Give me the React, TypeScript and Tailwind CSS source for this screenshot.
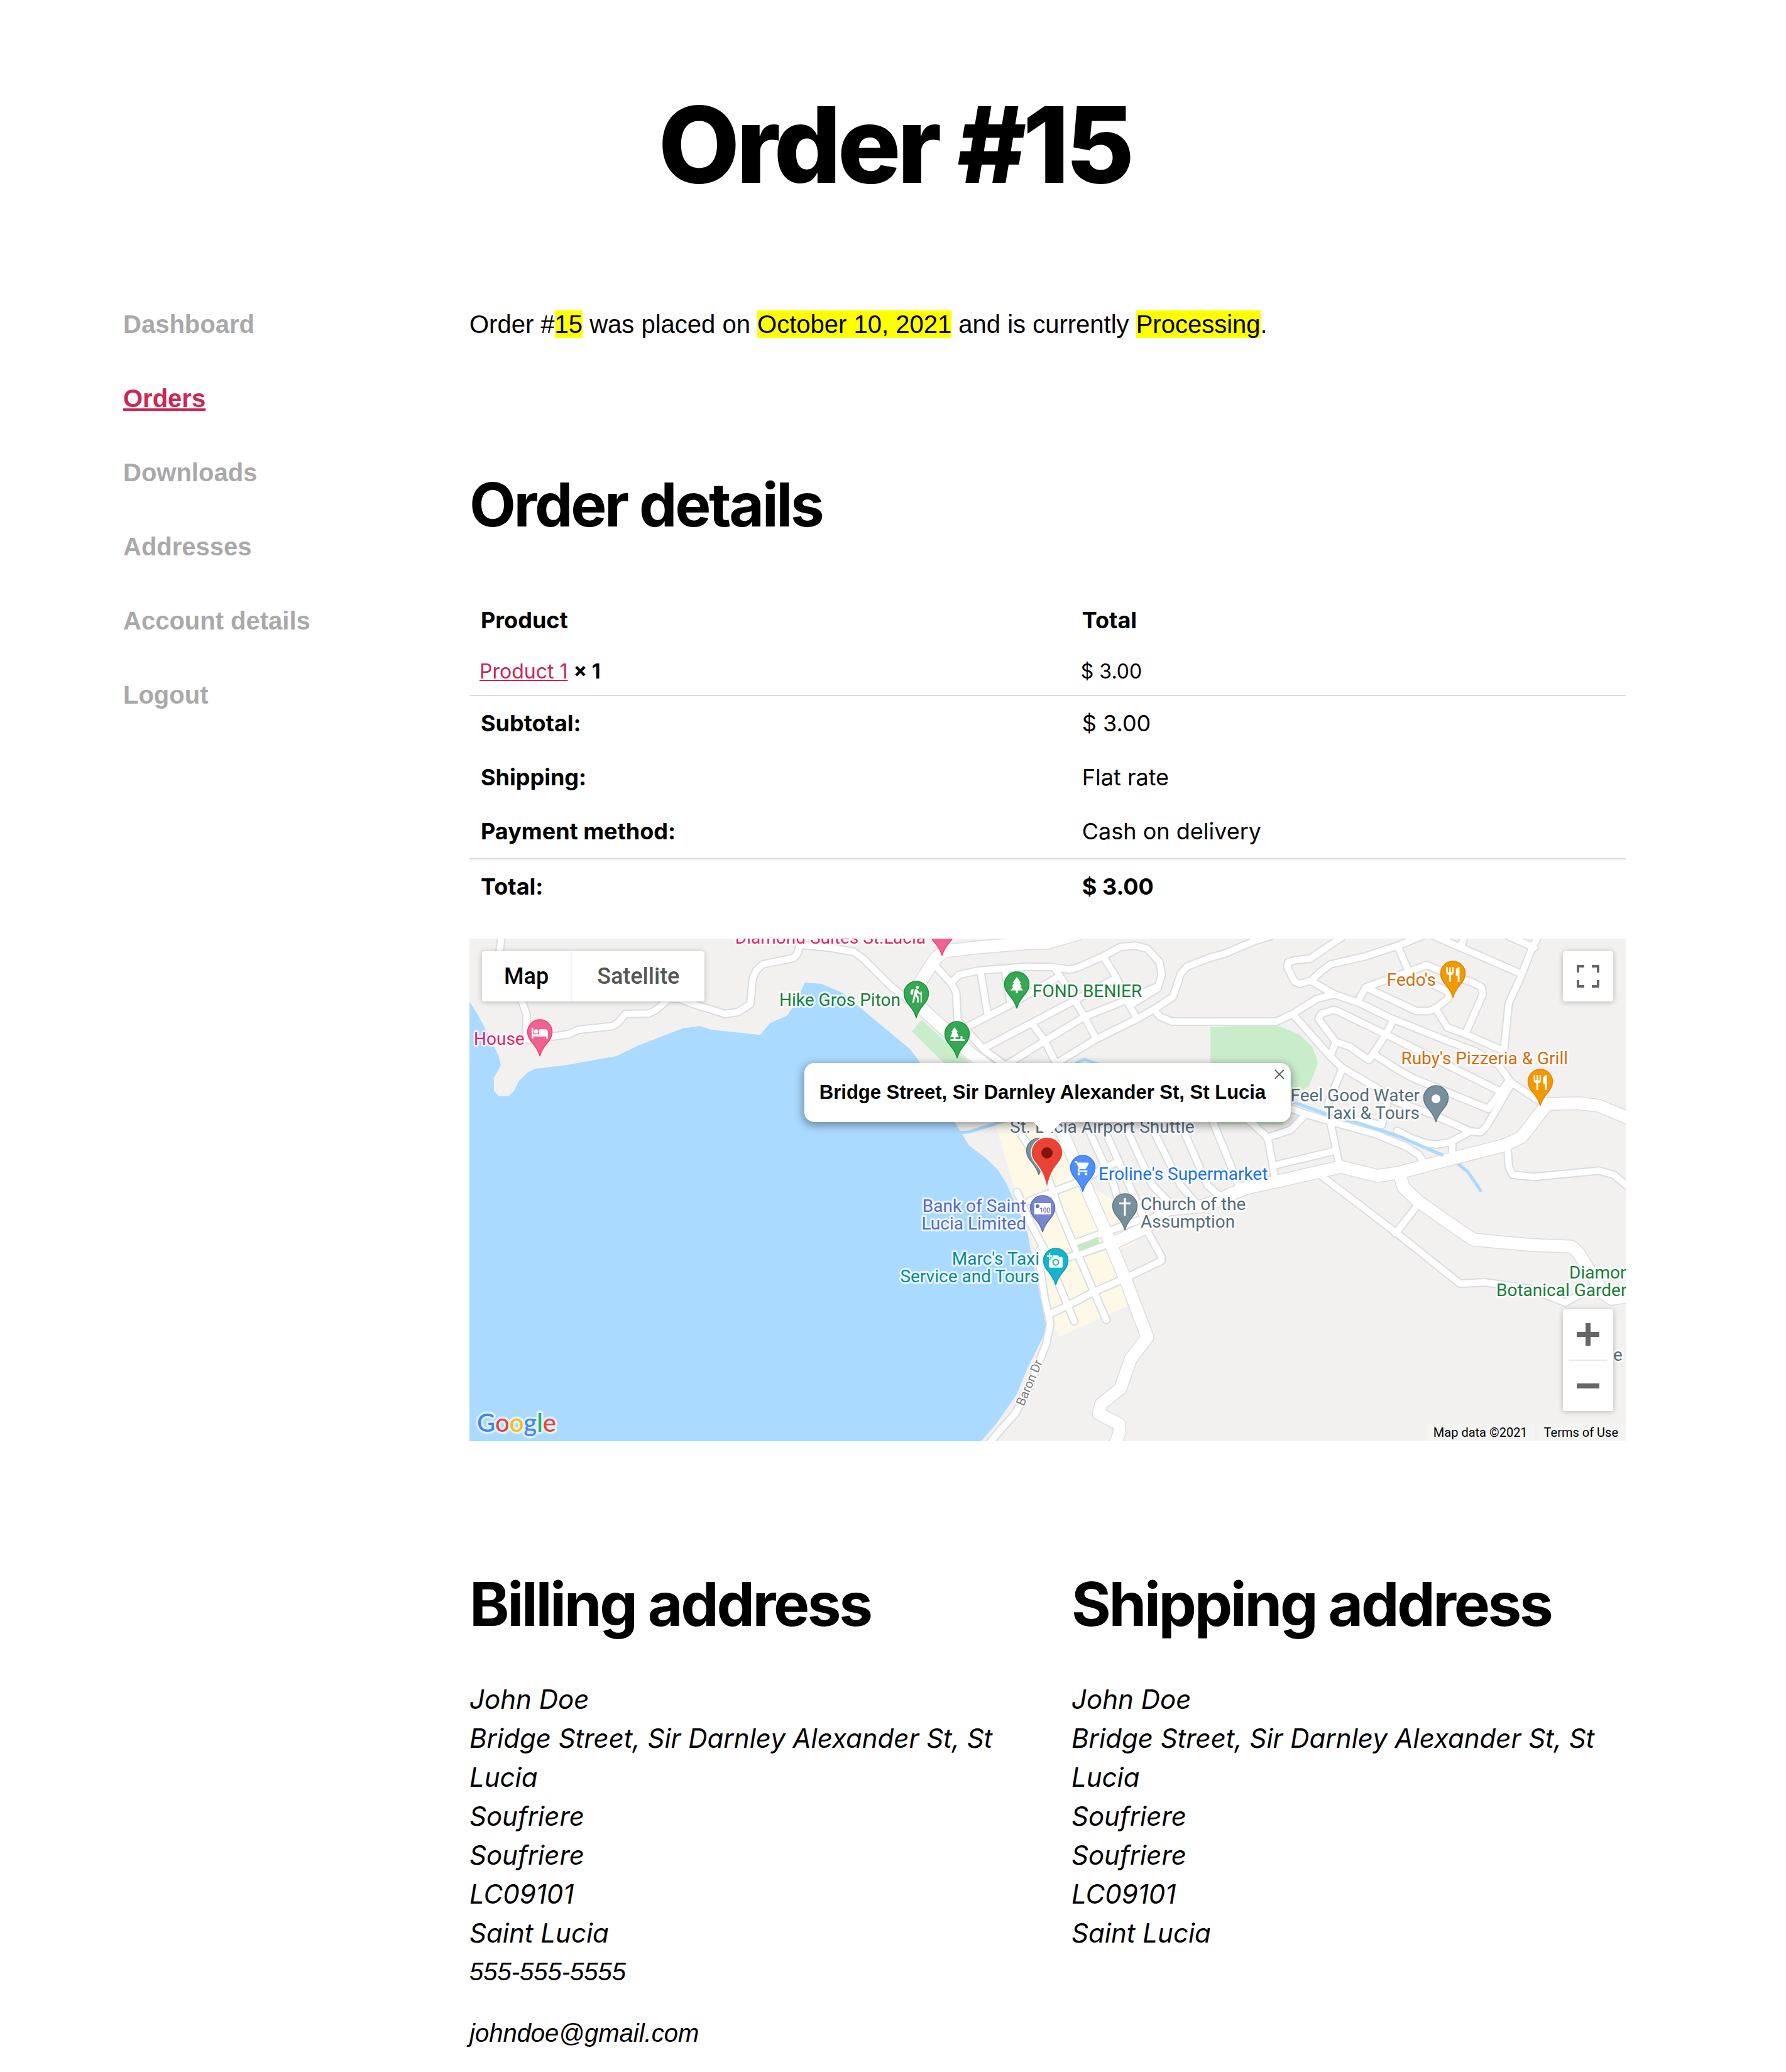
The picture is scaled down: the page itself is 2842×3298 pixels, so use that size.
import React from "react";
import { MdAddAPhoto, MdHiking, MdHotel, MdRestaurant, MdShoppingCart } from "react-icons/md";

type Tile = "nw" | "n" | "ne" | "s" | "se";
type Line = [Tile, string][];

const TILE_ORIGIN: Record<Tile, [number, number]> = {
  nw: [740, 1490],
  n: [1340, 1490],
  ne: [1960, 1490],
  s: [1340, 1880],
  se: [1960, 1880],
};
const UNIT_X = 2.45;
const UNIT_Y = 3;

function toPoints(line: Line): string {
  return line
    .flatMap(([tile, coords]) =>
      coords.split(" ").map((pair) => {
        const [u, v] = pair.split(",").map(Number);
        const [ox, oy] = TILE_ORIGIN[tile];
        return `${(ox + u / UNIT_X).toFixed(1)},${(oy + v / UNIT_Y).toFixed(1)}`;
      }),
    )
    .join(" ");
}

const WATER: Line = [
  ["nw", "0,280 17,312 45,365 95,480 130,570 140,617 112,678 113,740 132,765 170,765 190,740 210,692 245,650 275,633 400,615 590,573 680,520 850,440 915,430 960,447 1150,472 1190,415 1255,380 1280,335 1325,222 1390,228 1470,270"],
  ["n", "265,540 305,605 410,800 440,890 495,1000 560,1060 610,1120"],
  ["s", "640,10 720,230 760,480 795,690 785,740 720,900 680,1020 600,1160 540,1245"],
  ["nw", "0,2460"],
];

const TOWN: Line = [
  ["n", "595,885 750,885 870,1000 920,1170"],
  ["s", "1060,90 1160,150 1140,300 1075,330 1110,597 850,742 825,690 790,520 740,270 665,10"],
];

const PARKS: Line[] = [
  [["n", "310,400 272,455 400,610 500,610"]],
  [["ne", "-83,435 0,430 185,430 265,470 315,530 337,605 300,720 250,750 200,900 -83,900"]],
];

const STREAMS: Line[] = [
  [["ne", "245,795 370,850 500,895 650,955 820,1045"]],
  [["ne", "880,1085 920,1125 960,1195"], ["se", "970,45"]],
  [["n", "890,640 915,605 945,588 995,610"]],
  [["n", "455,938 495,935 640,880"]],
];

const STREETS: Line[] = [
  [["nw", "142,0 135,72 222,312 240,375 238,485 250,497 340,480 405,468 440,448 575,430 595,415 625,372 715,370 745,352 795,300 835,298 890,325 1015,372 1065,362 1112,325 1122,200 1135,165 1160,135 1280,105 1295,85 1305,42 1420,55 1515,75"], ["n", "80,105 190,240 245,290 300,350"]],
  [["n", "370,150 425,225 445,270 450,400 470,430 555,545 640,620"]],
  [["n", "425,225 455,185 530,165 720,146 820,148 885,160 920,150 1020,95 1085,52 1145,46 1190,60 1238,125 1246,185 1230,250 1130,325"]],
  [["n", "490,432 660,325 850,190"]],
  [["n", "560,530 740,415 890,318 1060,205"]],
  [["n", "640,615 790,500 945,385 1110,305 1230,240"]],
  [["n", "845,600 990,492 1150,395 1215,350 1290,290 1320,180 1345,145 1430,105 1500,80"], ["ne", "85,25 150,0"]],
  [["n", "835,165 880,250 945,385 990,490"]],
  [["n", "1020,100 1070,200 1110,310 1150,395"]],
  [["n", "740,415 790,500 835,610"]],
  [["n", "540,170 567,370"]],
  [["n", "636,165 655,310"]],
  [["n", "1215,350 1240,385 1285,408"], ["ne", "0,408 175,408 240,370 330,300 400,278"]],
  [["ne", "430,5 305,108 250,114 220,125 217,150 245,218 265,228 310,212 345,172 385,135 520,97 650,45 750,-5"]],
  [["ne", "310,215 400,278 500,320 620,392 840,500 950,550 1040,615 1090,700 1215,800"]],
  [["ne", "800,355 840,435 915,470 1060,548"]],
  [["ne", "610,475 420,362 400,352 350,370 338,395 405,505 460,528 535,592 600,470 630,400"]],
  [["ne", "610,475 1045,740"]],
  [["ne", "405,505 385,575"]],
  [["ne", "240,375 385,575 430,628 600,750 640,790 780,850 930,932 970,937 995,905 1090,705"]],
  [["ne", "555,565 650,640 710,680 840,745 1000,825 1080,690"]],
  [["ne", "432,630 375,800"]],
  [["ne", "385,890 420,1095"]],
  [["ne", "200,810 290,850 400,890 560,945 680,1005 730,1045 750,1085"]],
  [["ne", "290,850 230,925 140,962"]],
  [["ne", "40,850 130,950 142,975 170,1165"]],
  [["ne", "165,1095 405,1025"]],
  [["ne", "605,800 585,902 480,875"]],
  [["ne", "645,930 700,965 760,990 800,995 850,985 920,940"]],
  [["ne", "860,985 860,1060"]],
  [["ne", "775,-8 900,58 1125,178"]],
  [["ne", "895,45 910,-5"]],
  [["ne", "1050,-15 1180,55"]],
  [["ne", "1195,0 1170,60 1125,200 1080,320 1060,560 1045,620"]],
  [["ne", "648,50 690,170"]],
  [["ne", "492,312 522,245 680,175 760,138 850,185 940,222 975,245 978,280 912,465"]],
  [["ne", "535,252 720,358 770,358 800,340 842,300 850,270 760,215"]],
  [["ne", "1075,1000 1080,1100 1095,1140 1180,1150 1430,1120 1490,1140 1568,1220"]],
  [["se", "350,-25 640,245 890,490 985,483 1170,515 1300,580 1410,505 1430,470"]],
  [["se", "638,250 728,110"]],
  [["s", "682,52 735,200 790,330 830,450 875,580 905,670"]],
  [["s", "770,330 770,400 790,560 812,680 795,780 730,980 675,1110 620,1185 560,1270"]],
  [["s", "730,95 910,10 1060,-85"]],
  [["n", "700,950 800,1140"], ["s", "850,150 905,310 975,510 1030,662"]],
  [["s", "910,295 1160,185"]],
  [["s", "770,405 925,348 1040,300"]],
  [["s", "815,632 875,597 980,530 1110,460 1245,380 1245,360 1190,240"]],
  [["n", "940,870 1060,1190"], ["s", "1075,90"]],
  [["n", "1010,890 1120,1190"], ["s", "1190,215"]],
  [["n", "1090,870 1210,1190"], ["s", "1290,120"]],
  [["n", "1190,870 1320,1190"], ["s", "1375,100"]],
  [["n", "1310,870 1425,1190"], ["s", "1480,80"]],
  [["n", "1440,870 1550,1200"]],
];

const AVENUES: Line[] = [
  [["n", "920,-10 800,32 740,32 520,55 400,72 365,105 330,170 290,250 278,310 400,445 500,560 700,740 840,890"], ["s", "870,-200 930,-30 1020,220 1050,310 1105,470 1190,745 1125,850 1085,990 1010,1065 1000,1110 1080,1160 1082,1200 1060,1270"]],
  [["s", "1050,300 1185,222 1270,135 1400,120 1460,95"], ["se", "0,60 60,32 200,-5"], ["ne", "425,1102 570,1145 650,1130 860,1062 1060,1000 1130,960 1230,802 1350,798 1430,810 1570,880"]],
  [["ne", "655,1140"], ["se", "670,30 730,100 920,262 945,280 1170,305 1325,313 1350,340 1450,535 1480,562 1545,550"]],
];

const PLAZA: Line = [["s", "915,305 997,267 1003,300 925,337"]];

function Roads() {
  const layers: [Line[], number, string][] = [
    [STREETS, 14, "#dadce0"],
    [AVENUES, 22, "#dadce0"],
    [STREETS, 10, "#ffffff"],
    [AVENUES, 19, "#ffffff"],
  ];
  return (
    <g fill="none" strokeLinecap="round" strokeLinejoin="round">
      {layers.map(([lines, width, color], layer) => (
        <g key={layer} stroke={color} strokeWidth={width}>
          {lines.map((line, i) => (
            <polyline key={i} points={toPoints(line)} />
          ))}
        </g>
      ))}
    </g>
  );
}

const PIN_SHAPE =
  "M0 0C-2 -8 -6 -14 -11 -20C-16 -26 -19.500 -31 -19.500 -38.500A19.500 19.500 0 0 1 19.500 -38.500C19.500 -31 16 -26 11 -20C6 -14 2 -8 0 0Z";

interface PinProps {
  x: number;
  y: number;
  fill: string;
  edge: string;
  children?: React.ReactNode;
}

function Pin({ x, y, fill, edge, children }: PinProps) {
  return (
    <g transform={`translate(${x} ${y})`}>
      <path d={PIN_SHAPE} fill={fill} stroke={edge} strokeWidth="1.5" />
      <g fill="#ffffff" color="#ffffff">{children}</g>
    </g>
  );
}

const GREEN = { fill: "#34a853", edge: "#1e8e3e" };
const PINK = { fill: "#f06292", edge: "#ec407a" };
const ORANGE = { fill: "#f29900", edge: "#e8830c" };
const SLATE = { fill: "#78909c", edge: "#5c7a89" };

interface PlaceProps {
  x: number;
  y: number;
  color: string;
  end?: boolean;
  lines: string[];
}

function Place({ x, y, color, end, lines }: PlaceProps) {
  return (
    <text
      x={x}
      y={y}
      fill={color}
      stroke="#ffffff"
      strokeOpacity="0.75"
      strokeWidth="6"
      strokeLinejoin="round"
      paintOrder="stroke"
      fontSize="28"
      textAnchor={end ? "end" : "start"}
    >
      {lines.map((line, i) => (
        <tspan key={line} x={x} dy={i === 0 ? 0 : 28}>
          {line}
        </tspan>
      ))}
    </text>
  );
}

function MapCanvas() {
  return (
    <svg
      className="block h-full w-full font-['Roboto',sans-serif]"
      viewBox="747 1494 1840 800"
      preserveAspectRatio="xMidYMid slice"
      role="img"
      aria-label="Map of Soufriere"
    >
      <rect x="747" y="1494" width="1840" height="800" fill="#f2f1ef" />
      <polygon points={toPoints(TOWN)} fill="#fdf9e6" />
      <polygon points={toPoints(WATER)} fill="#aadaff" />
      {PARKS.map((park, i) => (
        <polygon key={i} points={toPoints(park)} fill="#c9edcb" />
      ))}
      <g fill="none" stroke="#aadaff" strokeWidth="5" strokeLinecap="round" strokeLinejoin="round">
        {STREAMS.map((stream, i) => (
          <polyline key={i} points={toPoints(stream)} />
        ))}
      </g>
      <Roads />
      <g fill="none" stroke="#aadaff" strokeWidth="5" strokeLinecap="round" strokeLinejoin="round">
        <polyline points={toPoints(STREAMS[0])} />
      </g>
      <polygon points={toPoints(PLAZA)} fill="#c5e8c5" />

      <Place x={754} y={1663} color="#e91e63" lines={["House"]} />
      <Place x={1473} y={1502} color="#e91e63" end lines={["Diamond Suites St.Lucia"]} />
      <Place x={1433} y={1601} color="#188038" end lines={["Hike Gros Piton"]} />
      <Place x={1643} y={1587} color="#188038" lines={["FOND BENIER"]} />
      <Place x={2285} y={1569} color="#d56e0c" end lines={["Fedo's"]} />
      <Place x={2495} y={1694} color="#d56e0c" end lines={["Ruby's Pizzeria & Grill"]} />
      <Place x={2259} y={1753} color="#546e7a" end lines={["Feel Good Water", "Taxi & Tours"]} />
      <Place x={1607} y={1803} color="#546e7a" lines={["St. Lucia Airport Shuttle"]} />
      <Place x={1748} y={1878} color="#1a73e8" lines={["Eroline's Supermarket"]} />
      <Place x={1633} y={1929} color="#5c6bc0" end lines={["Bank of Saint", "Lucia Limited"]} />
      <Place x={1654} y={2013} color="#0b8a94" end lines={["Marc's Taxi", "Service and Tours"]} />
      <Place x={1815} y={1926} color="#546e7a" lines={["Church of the", "Assumption"]} />
      <Place x={2497} y={2035} color="#188038" lines={["Diamond"]} />
      <Place x={2381} y={2063} color="#188038" lines={["Botanical Gardens"]} />
      <Place x={2567} y={2166} color="#546e7a" lines={["e"]} />
      <text
        transform="translate(1629 2239) rotate(-67)"
        fill="#7a7d80"
        stroke="#ffffff"
        strokeWidth="4"
        paintOrder="stroke"
        fontSize="20"
      >
        Baron Dr
      </text>

      <Pin x={859} y={1681} {...PINK}>
        <MdHotel x={-14} y={-51} size={28} />
      </Pin>
      <Pin x={1499} y={1521} {...PINK} />
      <Pin x={1458} y={1620} {...GREEN}>
        <MdHiking x={-15} y={-53} size={30} />
      </Pin>
      <Pin x={1618} y={1605} {...GREEN}>
        <path d="M0 -50L7 -40H4.500L8 -34.500H5.500L10 -28.500H1.500V-24H-1.500V-28.500H-10L-5.500 -34.500H-8L-4.500 -40H-7Z" />
      </Pin>
      <Pin x={1523} y={1684} {...GREEN}>
        <path d="M-4 -49L1.500 -41H-0.500L3 -33H-2.500V-30H5.500V-35H8.500V-30H12V-27H-10.500V-30H-5.500V-33H-11L-7.500 -41H-9.500Z" />
      </Pin>
      <Pin x={2312} y={1588} {...ORANGE}>
        <MdRestaurant x={-14} y={-51} size={28} />
      </Pin>
      <Pin x={2451} y={1760} {...ORANGE}>
        <MdRestaurant x={-14} y={-51} size={28} />
      </Pin>
      <Pin x={2285} y={1786} {...SLATE}>
        <circle cx="0" cy="-37" r="7" />
      </Pin>
      <Pin x={1653} y={1870} {...SLATE} />
      <Pin x={1723} y={1897} fill="#4f8ff7" edge="#3b7ceb">
        <MdShoppingCart x={-14} y={-51} size={27} />
      </Pin>
      <Pin x={1659} y={1961} fill="#7986cb" edge="#5c6bc0">
        <rect x="-13" y="-46" width="26" height="18" />
        <circle cx="-8" cy="-41" r="3" fill="#5c6bc0" />
        <text x="-5" y="-31" fontSize="10" fontWeight="500" fill="#5c6bc0">100</text>
      </Pin>
      <Pin x={1680} y={2045} fill="#12b5cb" edge="#129eaf">
        <MdAddAPhoto x={-14} y={-51} size={26} />
      </Pin>
      <Pin x={1790} y={1958} {...SLATE}>
        <path d="M-1.500 -51H1.500V-44H9V-41H1.500V-23H-1.500V-41H-9V-44H-1.500Z" />
      </Pin>

      <g transform="translate(1666 1893)">
        <path
          d="M0 0C-2 -14 -5 -22 -11 -32C-17 -42 -25 -47 -25 -58A25 25 0 0 1 25 -58C25 -47 17 -42 11 -32C5 -22 2 -14 0 0Z"
          fill="#ea4335"
          stroke="#ffffff"
          strokeWidth="1.5"
        />
        <circle cx="0" cy="-58" r="9" fill="#811411" />
      </g>

      <text
        x="759"
        y="2279"
        fontSize="40"
        fontWeight="500"
        stroke="#ddf0ff"
        strokeWidth="7"
        strokeLinejoin="round"
        paintOrder="stroke"
        className="font-['Lato',sans-serif]"
      >
        <tspan fill="#4285f4">G</tspan>
        <tspan fill="#ea4335">o</tspan>
        <tspan fill="#fbbc04">o</tspan>
        <tspan fill="#4285f4">g</tspan>
        <tspan fill="#34a853">l</tspan>
        <tspan fill="#ea4335">e</tspan>
      </text>
    </svg>
  );
}

function OrderMap() {
  return (
    <section className="relative mt-10 h-[800px] w-full overflow-hidden font-['Roboto',sans-serif]">
      <MapCanvas />

      <div className="absolute top-5 left-5 flex h-20 rounded-sm bg-white text-4xl font-medium shadow-[0_1px_8px_rgba(0,0,0,0.25)]">
        <button type="button" className="border-r-2 border-gray-100 px-[35px] text-black">
          Map
        </button>
        <button type="button" className="px-10 text-[#565656]">
          Satellite
        </button>
      </div>

      <button
        type="button"
        aria-label="Toggle fullscreen view"
        className="absolute top-5 right-5 flex size-20 items-center justify-center rounded-sm bg-white shadow-[0_1px_8px_rgba(0,0,0,0.25)]"
      >
        <svg className="size-9" viewBox="0 0 36 36" fill="none" stroke="#666666" strokeWidth="4">
          <path d="M2 12V2H12M24 2H34V12M34 24V34H24M12 34H2V24" />
        </svg>
      </button>

      <div className="absolute top-[198px] left-1/2 -translate-x-1/2">
        <div className="flex h-[94px] items-center rounded-2xl bg-white pr-10 pl-6 shadow-[0_4px_14px_2px_rgba(0,0,0,0.35)]">
          <p className="font-['Liberation_Sans',sans-serif] text-[31px] font-bold whitespace-nowrap text-black">
            Bridge Street, Sir Darnley Alexander St, St Lucia
          </p>
        </div>
        <button type="button" aria-label="Close" className="absolute top-2 right-2 p-[2px]">
          <svg className="size-4" viewBox="0 0 16 16" stroke="#5f6368" strokeWidth="2">
            <path d="M1 1L15 15M15 1L1 15" />
          </svg>
        </button>
        <svg className="absolute top-full left-1/2 h-[22px] w-11 -translate-x-1/2" viewBox="0 0 44 22" fill="#ffffff">
          <path d="M0 0H44L24 21Q22 23 20 21Z" />
        </svg>
      </div>

      <div className="absolute right-5 bottom-12 flex w-20 flex-col items-center rounded-sm bg-white shadow-[0_1px_8px_rgba(0,0,0,0.25)]">
        <button type="button" aria-label="Zoom in" className="flex size-20 items-center justify-center">
          <svg className="size-9" viewBox="0 0 36 36" fill="#666666">
            <path d="M14 0H22V14H36V22H22V36H14V22H0V14H14Z" />
          </svg>
        </button>
        <div className="h-[2px] w-[60px] bg-[#e6e6e6]" />
        <button type="button" aria-label="Zoom out" className="flex size-20 items-center justify-center">
          <svg className="size-9" viewBox="0 0 36 36" fill="#666666">
            <path d="M0 14H36V22H0Z" />
          </svg>
        </button>
      </div>

      <div className="absolute right-0 bottom-0 flex gap-[2px] text-xl leading-7 text-black">
        <span className="bg-neutral-100/70 px-3">Map data ©2021</span>
        <a href="#terms" className="bg-neutral-100/70 px-3">
          Terms of Use
        </a>
      </div>
    </section>
  );
}

const NAV_ITEMS = ["Dashboard", "Orders", "Downloads", "Addresses", "Account details", "Logout"];

function AccountNav() {
  return (
    <nav className="w-[551px] shrink-0 font-['Liberation_Sans',sans-serif]">
      <ul className="flex flex-col gap-[58px] text-[40px] leading-[60px] font-bold">
        {NAV_ITEMS.map((item) => (
          <li key={item}>
            {item === "Orders" ? (
              <a href="#orders" aria-current="page" className="text-[#cd2653] underline decoration-4 underline-offset-2">
                {item}
              </a>
            ) : (
              <a href={`#${item.toLowerCase().replace(" ", "-")}`} className="text-[#a9a9a9]">
                {item}
              </a>
            )}
          </li>
        ))}
      </ul>
    </nav>
  );
}

const SUMMARY = [
  { label: "Subtotal:", value: "$ 3.00" },
  { label: "Shipping:", value: "Flat rate" },
  { label: "Payment method:", value: "Cash on delivery" },
];

function OrderTable() {
  return (
    <table className="mt-[93px] w-full table-fixed border-separate border-spacing-0 text-left text-4xl leading-[50px]">
      <thead>
        <tr>
          <th scope="col" className="w-[52%] p-[18px] font-bold">Product</th>
          <th scope="col" className="p-[18px] font-bold">Total</th>
        </tr>
      </thead>
      <tbody>
        <tr className="text-[32px] leading-[44px]">
          <td className="border-b-2 border-[#dddddd] px-4 pt-[17px] pb-[15px]">
            <a href="#product-1" className="text-[#cd2653] underline decoration-2 underline-offset-2">Product 1</a>{" "}
            <strong className="font-bold">×&nbsp;1</strong>
          </td>
          <td className="border-b-2 border-[#dddddd] px-4 pt-[17px] pb-[15px]">$ 3.00</td>
        </tr>
      </tbody>
      <tfoot>
        {SUMMARY.map(({ label, value }, i) => {
          const border = i === SUMMARY.length - 1 ? "border-b-2 border-[#dddddd]" : "";
          return (
            <tr key={label}>
              <th scope="row" className={`p-[18px] font-bold ${border}`}>{label}</th>
              <td className={`p-[18px] ${border}`}>{value}</td>
            </tr>
          );
        })}
        <tr className="font-bold">
          <th scope="row" className="p-[18px]">Total:</th>
          <td className="p-[18px]">$ 3.00</td>
        </tr>
      </tfoot>
    </table>
  );
}

const ADDRESS_LINES = [
  "John Doe",
  "Bridge Street, Sir Darnley Alexander St, St Lucia",
  "Soufriere",
  "Soufriere",
  "LC09101",
  "Saint Lucia",
];

function Address({ title, phone, email }: { title: string; phone?: string; email?: string }) {
  return (
    <section>
      <h2 className="text-8xl leading-none font-bold tracking-[-0.035em]">{title}</h2>
      <address className="mt-[73px] text-[42px] leading-[62px] italic">
        {ADDRESS_LINES.map((line, i) => (
          <p key={i}>{line}</p>
        ))}
        {phone && (
          <p className="font-['Liberation_Sans',sans-serif] text-[40px] leading-[60px]">{phone}</p>
        )}
        {email && (
          <p className="mt-[38px] font-['Liberation_Sans',sans-serif] text-[40px] leading-[60px]">{email}</p>
        )}
      </address>
    </section>
  );
}

export default function App() {
  return (
    <div className="bg-white pt-[146px] pr-[255px] pb-8 pl-[196px] font-['Inter',sans-serif] text-black">
      <h1 className="pl-[64px] text-center text-[168px] leading-none font-extrabold tracking-[-0.035em]">Order #15</h1>
      <div className="mt-[172px] flex">
        <AccountNav />
        <main className="min-w-0 flex-1">
          <p className="font-['Liberation_Sans',sans-serif] text-[40px] leading-[60px]">
            Order #<mark className="bg-[#ffff00]">15</mark> was placed on{" "}
            <mark className="bg-[#ffff00]">October 10, 2021</mark> and is currently{" "}
            <mark className="bg-[#ffff00]">Processing</mark>.
          </p>
          <h2 className="mt-[209px] text-8xl leading-none font-bold tracking-[-0.035em]">Order details</h2>
          <OrderTable />
          <OrderMap />
          <div className="mt-[211px] grid grid-cols-2 gap-x-[76px]">
            <Address title="Billing address" phone="555-555-5555" email="johndoe@gmail.com" />
            <Address title="Shipping address" />
          </div>
        </main>
      </div>
    </div>
  );
}
